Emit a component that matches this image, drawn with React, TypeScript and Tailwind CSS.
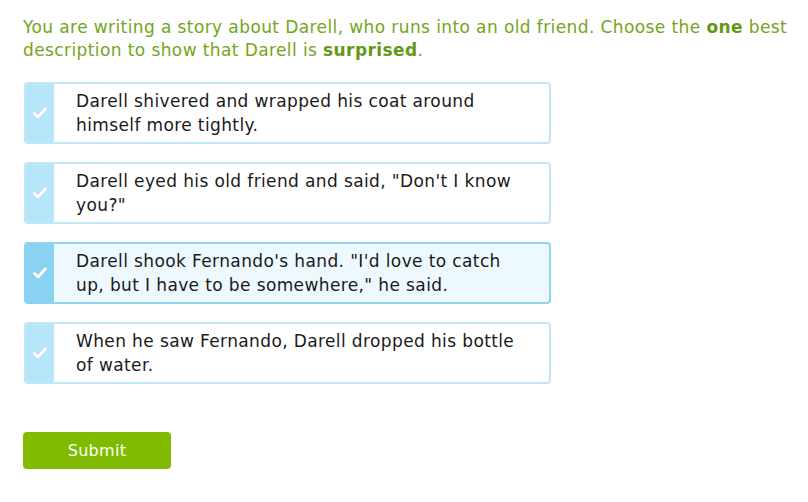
import React from 'react'

const OPTIONS = [
  'Darell shivered and wrapped his coat around himself more tightly.',
  'Darell eyed his old friend and said, "Don\'t I know you?"',
  'Darell shook Fernando\'s hand. "I\'d love to catch up, but I have to be somewhere," he said.',
  'When he saw Fernando, Darell dropped his bottle of water.',
]

const SELECTED = 2

function Check() {
  return (
    <svg width="14" height="12" viewBox="0 0 14 12" fill="none">
      <path d="M1.5 6.5 L5 10 L12.5 1.8" stroke="white" strokeWidth="2.8" strokeLinecap="round" strokeLinejoin="round" />
    </svg>
  )
}

export default function App() {
  return (
    <div className="min-h-screen bg-white pl-[23px] pr-[8px] pt-[16px] font-['DejaVu_Sans',Verdana,sans-serif]">
      {/* Prompt */}
      <p className="text-[17px] leading-[23px] text-[#74a521] tracking-[0.4px]">
        You are writing a story about Darell, who runs into an old friend. Choose the{' '}
        <b className="text-[#659716]">one</b> best description to show that Darell is{' '}
        <b className="text-[#659716]">surprised</b>.
      </p>

      {/* Choices */}
      <div className="mt-[20px] flex flex-col gap-[18px] w-[527px] ml-px">
        {OPTIONS.map((text, i) => {
          const sel = i === SELECTED
          return (
            <div
              key={i}
              className={`flex rounded-[4px] border-2 overflow-hidden ${
                sel ? 'border-[#8fd3ee] bg-[#edf9fe]' : 'border-[#bfe7f6] bg-white'
              }`}
            >
              <div
                className={`w-[28px] shrink-0 flex items-center justify-center ${
                  sel ? 'bg-[#8ad2f1]' : 'bg-[#b5e6fa]'
                }`}
              >
                <Check />
              </div>
              <div className="pl-[22px] pr-[16px] py-[5px] text-[17px] leading-[24px] tracking-[0.38px] text-[#1a1a1a]">
                {text}
              </div>
            </div>
          )
        })}
      </div>

      {/* Submit */}
      <button className="mt-[48px] w-[148px] h-[37px] rounded-[4px] bg-[#80bb00] text-white text-[16px] tracking-[0.3px]">
        Submit
      </button>
    </div>
  )
}
